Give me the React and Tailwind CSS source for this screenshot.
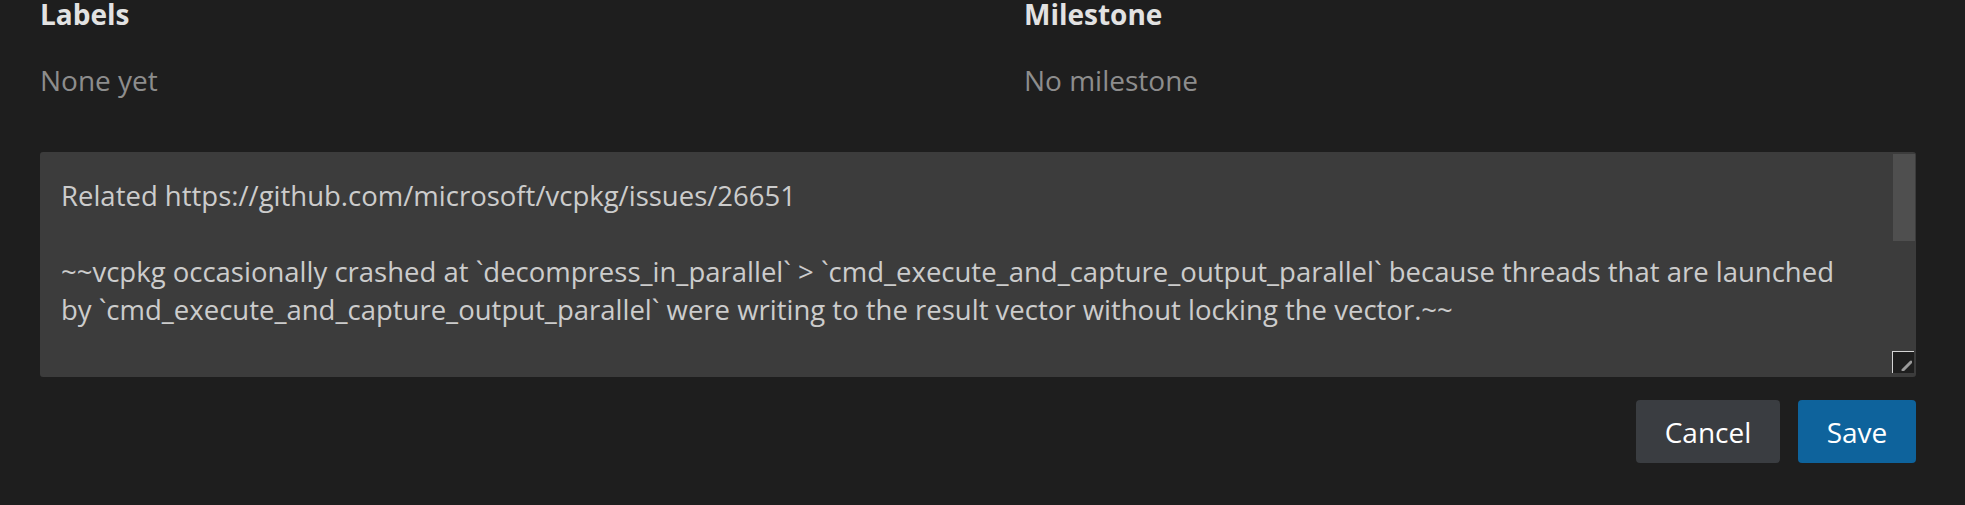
import React from "react";

const lines = [
  "Related https://github.com/microsoft/vcpkg/issues/26651",
  "",
  "~~vcpkg occasionally crashed at `decompress_in_parallel` > `cmd_execute_and_capture_output_parallel` because threads that are launched",
  "by `cmd_execute_and_capture_output_parallel` were writing to the result vector without locking the vector.~~",
];

function Field({ title, value }) {
  return (
    <div className="flex flex-col">
      <div className="text-[28px] leading-[28px] font-bold text-[#e2e2e2]">{title}</div>
      <div className="mt-[38px] text-[28px] leading-[28px] text-[#8d8d8d]">{value}</div>
    </div>
  );
}

export default function App() {
  return (
    <div className="w-full h-[505px] bg-[#1e1e1e] pl-[40px] pr-[49px] font-['Open_Sans',sans-serif] overflow-hidden">
      <div className="grid grid-cols-[984px_1fr]">
        <Field title="Labels" value="None yet" />
        <Field title="Milestone" value="No milestone" />
      </div>

      <div className="relative mt-[58px] h-[225px] rounded-[3px] bg-[#3c3c3c] overflow-hidden">
        <div className="pt-[25px] pl-[21px] pr-[40px] text-[27.5px] leading-[38px] text-[#cccccc]">
          {lines.map((line, i) => (
            <div key={i} className="whitespace-pre h-[38px]">
              {line}
            </div>
          ))}
        </div>
        <div className="absolute right-[1px] top-[2px] w-[22px] h-[87px] bg-[#4f4f4f]" />
        <div className="absolute right-[2px] bottom-[4px] w-[22px] h-[22px] bg-[#1e1e1e] border-l border-t border-[#d4d4d4] flex items-end justify-end p-[2px]">
          <svg width="12" height="12" viewBox="0 0 12 12">
            <path d="M3 11 L11 3" stroke="#9a9a9a" strokeWidth="3" strokeLinecap="round" />
          </svg>
        </div>
      </div>

      <div className="mt-[23px] flex justify-end gap-[18px]">
        <button className="h-[63px] w-[144px] rounded-[4px] bg-[#3a3d41] text-[28px] text-white">
          Cancel
        </button>
        <button className="h-[63px] w-[118px] rounded-[4px] bg-[#0e639c] text-[28px] text-white">
          Save
        </button>
      </div>
    </div>
  );
}
